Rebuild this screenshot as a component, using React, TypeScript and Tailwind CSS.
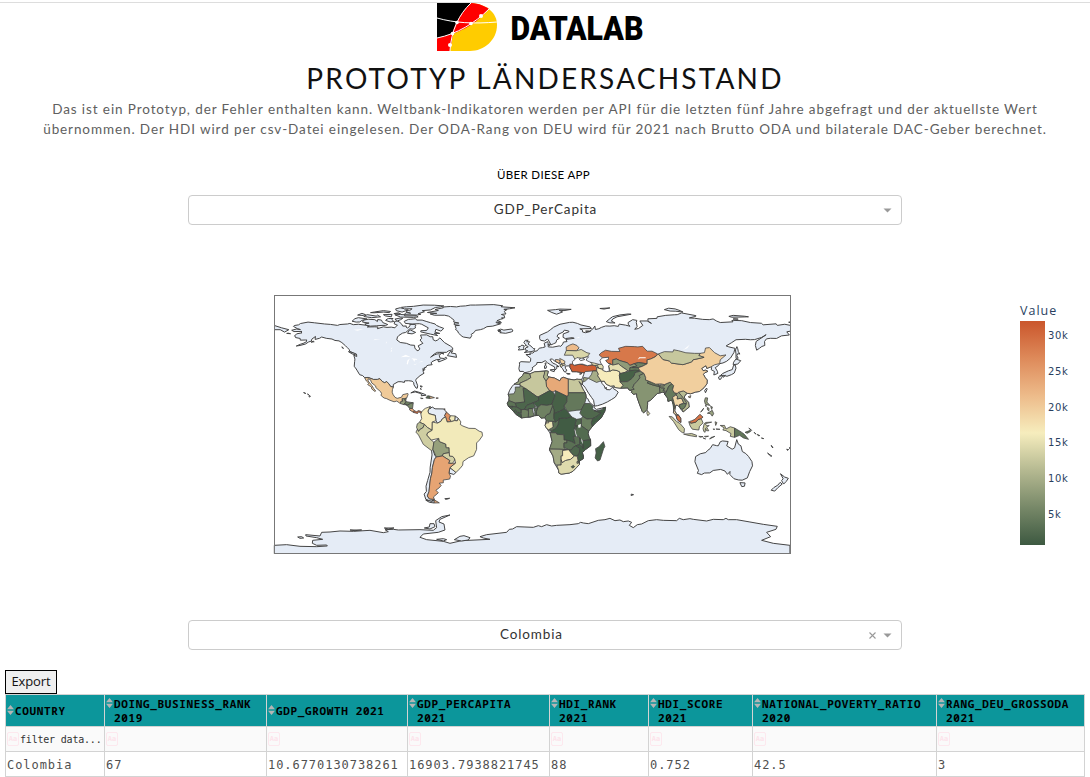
import React from "react";

type Shape = [number | null, string];

const LAND: string[] = [
  // North America down to the Mexican border
  "-168,65.6 -164.5,66.5 -161.9,66.1 -163.8,66.6 -166.8,68.3 -166.2,68.9 -163.2,69.4 -161.9,70.3 -156.6,71.3 -152,70.8 -145,70 -141,69.7 -136,69 -134.4,69.6 -129,70 -127.4,70.4 -125,69.5 -121.5,69.8 -115.2,69 -113.9,68.4 -115.3,67.9 -110,68 -107.8,67.9 -108.2,66.7 -104,68 -101.5,67.6 -98.5,67.8 -96,67.3 -95.5,68.1 -94.2,69.1 -96.5,70.1 -96,71.9 -94,72 -92.9,71.3 -91.5,70.2 -90.5,68.5 -88,68.6 -88.3,67.9 -87.3,67.2 -86,68 -85.5,68.8 -85.6,69.7 -82.6,69.7 -81.3,69.2 -82,68.1 -81.3,67.6 -83.3,66.4 -85.8,66.6 -87,65.2 -88.5,64.1 -90.7,63.6 -93.2,62 -94.2,60.9 -94.7,58.9 -92.3,57.1 -88,56.5 -85,55.3 -82.3,55.1 -82.1,53.3 -81.4,52.2 -79.9,51.2 -78.6,52.6 -79.8,54.7 -76.5,56.5 -78.5,58.8 -77.3,59.9 -78.1,62.3 -73.8,62.4 -71.4,61.1 -69.6,61.1 -69.3,59 -67.6,58.2 -66.2,58.8 -64.6,60.3 -61.4,57 -57.3,54.6 -55.7,53.3 -55.7,52.1 -58.8,51.1 -60,50.2 -66.4,50.2 -68.5,49.1 -71.1,46.8 -68.7,48.3 -66.6,49.1 -65.1,49.2 -64.2,48.7 -65.1,48.1 -64.5,46.2 -61.5,45.9 -60.5,47 -59.8,45.9 -61,45.3 -65.4,43.5 -66.1,44.5 -64.4,45.3 -67.1,45.1 -70.1,43.7 -70.8,42.8 -70,41.6 -72.9,41.2 -74,40.6 -74.2,39.7 -75.5,39.5 -75.1,38.4 -76,37.2 -76.3,39 -76.3,37 -75.7,35.6 -78.5,33.9 -81.3,31.4 -81.5,30.7 -80.1,26.9 -80.4,25.2 -81.2,25.2 -82.7,27.5 -82.9,29.1 -84,30.1 -86.4,30.4 -89.2,30.3 -89.4,29.2 -91.6,29.7 -93.8,29.7 -97.1,27.8 -97.1,25.9 -99,26.4 -100.3,28.3 -101.7,29.8 -103.1,29 -104.5,29.6 -106.5,31.8 -108.2,31.3 -111,31.3 -114.7,32.7 -117.1,32.5 -118.5,34 -120.6,34.6 -122.5,37.8 -123.8,39.8 -124.4,40.3 -124.1,43.7 -123.9,45.5 -124.7,48.2 -122.6,47.3 -122.8,49 -127.4,50.8 -128,52.3 -129.3,53.6 -130.5,54.8 -133,57 -135,58.2 -137.8,58.5 -139.9,59.5 -143.9,60 -147.1,60.9 -148.6,60 -151.7,59.2 -151.4,61.3 -154,59.4 -154.2,58.1 -156.3,57.4 -158.4,56 -162.2,55 -164.8,54.6 -161.8,55.9 -160.1,56.4 -157.7,57.6 -157.6,58.9 -158.5,58.8 -162,58.7 -162.1,59.9 -165.3,60.5 -165.3,61.1 -166.1,61.5 -164.6,63.1 -160.8,63.8 -161.5,64.4 -160.8,64.8 -166.4,64.7",
  // Canadian Arctic
  "-114,70.6 -117,70 -116.1,69.2 -113,68.5 -109,68.7 -105,69 -102.4,69 -101,69.6 -104.5,71 -105.4,72.7 -108,73.1 -108.2,71.7 -110,73 -114.5,73.3 -117.9,72.7 -118.6,71.3",
  "-121.5,74.4 -115.5,73.5 -119,72.5 -120.5,71.4 -123,71.3 -125.9,71.9 -123.9,73.7",
  "-100.4,73.8 -97.3,73.8 -98,73 -96.7,71.7 -99.3,71.4 -102.5,72.5 -101.5,73.4",
  "-92.4,74.1 -90.5,73.9 -92,73 -94.3,72.1 -96,73.4",
  "-108.2,76.2 -106,75 -112.2,74.4 -117.7,75.2 -115.4,76.5 -109,75.5",
  "-122,76.2 -118,75.9 -116.5,76.5 -119,77.4",
  "-104,76.5 -98,76.7 -98.5,75 -102.5,75.6",
  "-110,78.4 -113,77.9 -110.5,77.8 -103.8,78.3 -100,77.9 -99,78.7 -104,79.3",
  "-96.7,77.2 -92,77 -93.5,77.8",
  "-89.2,75.6 -81,75.7 -79.8,74.9 -83,74.6 -92,74.8 -96,76.4 -92,76.6 -89,76.4",
  "-87,79.7 -91,78.3 -95,79.3 -95.5,80.5 -92.4,81.3 -88,80.4",
  "-68.5,83.1 -61.9,82.6 -64.3,81.9 -67.8,81.5 -71.2,79.8 -76.9,79.3 -75.4,78.5 -79.8,77.2 -77.9,76.8 -80.6,76.2 -89.5,76.5 -88.3,77.9 -85,77.5 -88,78.4 -87,79.7 -85.8,79.3 -84,80.6 -89.4,80.5 -91.4,81.6 -87.9,82 -83,82.3 -76.3,83.2",
  "-86.6,73.2 -84.9,73.3 -81.5,73.7 -80.8,72.7 -77,72.7 -74.2,71.8 -71.2,70.9 -68,70 -67,69 -64.8,68 -61.9,66.9 -63.9,65 -67.4,66.3 -68,64.3 -64.7,63.4 -68.5,63.5 -66.2,61.9 -71,62.9 -78,64.5 -77.9,65.3 -73.9,65.4 -72.7,67.3 -77.3,69.8 -79,70.2 -84,70 -88.7,70.4 -89.5,71.8",
  "-85,65.7 -81.5,64.1 -84,63.1 -87.2,63.5 -85.9,65.7",
  "-55.6,51.3 -56.8,49.8 -53.5,49.2 -53,46.7 -59.4,47.9 -57.4,50.7",
  "-64.5,49.9 -61.8,49.1 -63.5,49.5",
  "-128.4,50.7 -125,49.9 -123.5,48.4 -126,49.2",
  "-133,54.1 -131.8,53 -132.5,53.1",
  "-180,66 -176,66 -173,64.3 -170,66 -175,67.3 -180,68.9",
  "-171.5,63.4 -168.8,63.2 -170.5,63.6",
  "-154.5,57.3 -152.3,57.6 -153,58",
  // Greenland, Iceland
  "-46.8,82.6 -43.4,83.2 -39.9,83.2 -27,83.5 -20.8,82.7 -22,82 -12.2,81.3 -16,80.6 -20,80.2 -17.7,80.1 -19.7,78.8 -18.5,77 -20,76.9 -21.7,76.6 -19.8,76.1 -19.4,74.3 -21.6,74.2 -20.4,73.8 -22.2,73.3 -24.8,72.3 -22.1,71.5 -21.8,70.7 -25.5,71.4 -25.2,70.8 -22.3,70.1 -27.7,68.5 -31.8,68.1 -34.2,66.7 -36.4,66 -39.8,65.5 -40.7,64.1 -42.8,62.7 -42.4,61.9 -43.4,60.1 -48.3,60.9 -49.2,61.4 -51.6,63.6 -52.3,65.2 -53.7,66.1 -53.3,66.8 -54,68.8 -51,69 -54.7,69.6 -54.4,70.8 -51.4,70.6 -55,71.4 -54.7,72.6 -57.3,74.7 -58.6,75.5 -61.3,76.1 -68.5,76.1 -71.4,77 -66.8,77.4 -73.3,78 -65.7,79.4 -68,80.1 -62.2,81.3 -62.7,81.8 -60.3,82 -57.2,82.2 -53,81.9 -50.4,82.4",
  "-14.5,66.5 -13.6,65.1 -14.9,64.4 -18.7,63.5 -22.8,63.9 -21.8,64.4 -24,64.9 -22.1,65.4 -24.3,65.6 -22.2,66.4 -20,65.7",
  // Hawaii, Caribbean
  "-155.9,20.2 -154.9,19.5 -155.8,19",
  "-156.6,21 -156.1,20.7 -157,21.1",
  "-159.7,22.1 -159.3,22 -158.2,21.5",
  "-84.9,21.9 -82.3,23.2 -79.3,22.4 -75.6,21.1 -74.2,20.3 -77.7,19.9 -77.1,20.7 -78.5,21.6 -81.8,22.6",
  "-78.2,25.2 -77.8,24.2 -77.6,24.7",
  "-78.5,26.7 -77,26.6 -77.2,25.9",
  // Eurasia
  "-9,41.9 -9.5,38.7 -8.9,36.9 -6.5,36.9 -5.4,36 -2.1,36.7 -0.4,37.6 0.1,38.7 -0.3,39.4 3,41.9 3.1,43.1 6.5,43.1 8.9,44.4 10.5,42.9 12.3,41.7 15.4,40 15.7,37.9 17,39 16.9,40.4 18.5,40.2 16,41.9 14,42.8 12.4,44.9 12.3,45.4 13.9,45.6 14.3,45.2 15.2,44.2 18.5,42.5 19.4,41.9 19.4,40.5 21,38.8 22,36.8 23.2,36.4 23.4,37.4 24,37.7 23,39 22.8,40.5 24,40.7 26.1,40.8 26.2,39.5 27,38.2 27.6,36.7 30.6,36.7 34,36.2 36.2,36.6 35.7,34.6 34.9,32.5 34.3,31.3 32.3,31.2 32.5,29.9 34.2,27.8 34.9,29.4 34.6,28.1 36.6,25.9 37.2,24.9 39.1,21.7 41.2,18.7 42.6,16.8 43.3,12.7 45.4,13 48.7,14 52.2,15.6 55.3,17.4 57.8,19 59.8,22.4 58.5,23.6 56.4,24.9 56.3,26.3 54,24.1 51.6,24.2 51.4,25.9 50.8,24.8 50.1,26.7 48.5,28.5 48,30 50.1,30.1 51.5,27.9 54.5,26.6 57,26.9 57.3,25.7 61.5,25.2 66.5,25.4 67.3,24 68.2,23.7 69.5,22.8 69,22.3 70.4,20.9 72.6,21.4 72.8,19.2 74.4,14.6 76.6,8.9 77.5,8 79.2,9.5 79.9,10.4 80.3,13.8 80.3,15.9 82.2,16.6 85.1,19.5 87,21.5 89,21.9 90.6,22.4 91.8,22.2 92.4,20.7 94.3,18.2 94.5,16 97.2,16.9 98.1,14 98.7,11.5 98.3,8 100.1,6.5 100.7,4 101.4,2.8 103.5,1.3 103.4,4.2 102.1,6.2 100.5,7.3 99.2,9.3 99.5,12 100,13.4 100.9,13.4 102.6,12.2 103.5,10.6 105.1,8.6 107.2,10.4 109.3,12 108.9,15.3 106.4,17.9 105.9,19 106.7,20.7 108.1,21.6 110.4,21.3 113.8,22.5 116.5,22.9 119.6,25.5 121.7,28.2 121.9,30.9 120.6,32.4 119.2,34.9 120.3,36.1 122.4,36.9 121,37.8 119,37.4 118,39 121,40.9 121.6,39 124.3,40 125,39.7 124.7,38.1 126.9,36.9 126.5,34.4 129.3,35.5 129,37 127.5,39.5 129.7,41 130.6,42.3 132.9,42.8 135.5,44 138.2,46.3 140.5,50 141.3,53 137,54 135.1,54.7 139,57 142,59 148.5,59.3 152,59 155,59.1 159.8,60.6 163,62.5 160.1,60.5 156,57.8 155.5,55 156.4,51.7 158.3,53 160,54.3 162.1,55 161.9,57.8 163.2,59.6 165.9,60 170.3,59.9 173.7,61.7 179.2,62.3 177.4,64.5 180,65 180,69 176,69.8 170.8,69 170,70.1 160.9,69.4 159.7,70.5 152,71 146,72.3 140,72.5 139.1,72.4 139.9,71.5 131,71 128.5,72 126,73.5 123.3,73 118.8,73.2 113,74 109.4,74.2 113.9,75.3 114,75.8 104,77.7 101,76.5 98.9,76.4 93,76 87,75 86.8,73.9 80.5,73.6 80.6,71.9 83,70.4 80,72.1 74.9,72.1 77,69 73.9,66.8 71.3,66.3 73,68.2 72.4,71.1 72.8,72.5 69.9,73 66.7,71 66.9,69.5 68.1,68.4 64.9,69.2 60.5,69.9 59.9,68.3 57,68.8 54,68.5 51,68.6 48,67.6 46.3,66.7 43.9,66.1 43.5,68.6 42,66.4 40,65 37,65 40.4,64.8 37,63.9 34.9,64.4 34.8,65.9 33,66.6 41.1,66.8 40.3,67.9 33.8,69.3 31.3,70.4 28.2,71.2 25.8,71.1 19.2,69.8 14.8,67.8 12.4,65.9 10.5,64.5 5,62 5,59.7 5.7,58.6 8.4,58.1 10.4,59.5 11,58.9 12.9,55.4 14.7,56.2 16.4,57 16.8,58.7 18.8,60.1 17.1,61.3 17.8,62.7 21.4,64.4 22.2,65.7 25.3,65.1 25.4,64.5 21.5,63.1 21.3,60.7 22.9,59.8 28,60.5 29.1,60 23.3,59.2 24.1,57.7 21.6,57.4 21.1,56 19.7,54.4 18.6,54.7 14.1,53.8 11,54 10.9,56.5 10.6,57.7 8.1,56.5 8.8,54 7,53.5 4.7,53.1 3.3,51.3 1.6,50.9 0.2,49.7 -1.9,49.8 -1.4,48.7 -4.6,48.7 -1.2,46 -1.4,44 -1.9,43.4 -8,43.7 -9.2,43",
  "-3,58.6 -4.1,57.6 -2,57.6 -3.1,56 -1.1,54.6 0.5,52.9 1.7,52.7 1,51.8 1.4,51.3 -1,50.7 -5.7,50.1 -3.4,51.4 -5.3,52 -4.6,53.5 -3,53.9 -3.6,54.6 -5.1,55 -4.7,55.5 -6,57 -5,58.6",
  "-6.2,53.9 -6,52.2 -9.9,51.8 -9.2,52.9 -9.8,54.1 -8.2,54.5 -7.4,55.3 -5.7,54.6",
  "9.2,41.2 9.8,40.5 9.5,39.1 8.4,39 8.4,40.8",
  "9.5,43 9.2,41.5 8.6,42.3",
  "12.4,38.1 15.5,38.2 15.1,36.7 12.5,37.6",
  "23.7,35.6 26.3,35.2 24.7,34.9",
  "32.8,35.1 34.6,35.6 33.7,34.9",
  "10.9,55.7 12.6,56 12.2,55 11,55.3",
  "16,80 19,80.4 27,80.2 22,79.3 18.5,79.6 21,78.4 16.8,76.8 13.5,78 10.5,79.5",
  "47,80.8 54,81.2 50,80.4",
  "51.5,71.6 54,70.8 57.6,70.7 55,72 56,73.5 59,75 68.8,76.8 67,77 61,76.3 55.9,75.1 54,73.7",
  "95,81 92,80 96,79 100,78.9 105,78.3 103,79.3 99.5,80.5",
  "137,75.3 140,76 148,75.4 150.7,75 144,74.8 139,74.7",
  "139.9,73.4 143.5,73.4 140.5,73.6",
  "178.7,71.2 180,71.5 180,70.9",
  "143.6,50.7 144.7,49 143.2,49.3 142.6,47.9 143.5,46.1 142,46 142,49 141.6,51.9 142.6,54.2 143.2,52.7",
  "141.9,45.5 145.3,44.4 143.2,42 140,41.6 140.3,43.3",
  "141.4,41.4 142,39.2 140.8,35.8 138.9,34.7 135.7,33.5 133,34.2 131,33.9 132.6,35.4 136.7,37.3 139.4,38.2 140.3,41.2",
  "130.9,33.9 132,32.8 131.3,31.4 130.2,31.4 129.8,33",
  "134.6,34.1 133,32.8 132.4,33.5",
  "121.8,24.4 120.7,22 120.1,23.6 121.5,25.3",
  // Australia and Pacific
  "143.6,-13.8 145.4,-15 146.4,-19 148.8,-20.4 150.7,-22.4 153.1,-26 153.5,-29 151.5,-33 149.9,-37.4 146.3,-39 143.6,-38.8 140.6,-38 138.2,-35.6 137.7,-35 137.8,-32.9 136,-34.9 134.3,-32.6 131.3,-31.5 126.1,-32.2 123.7,-33.9 119.9,-34 118,-35.1 115,-34.2 115.8,-32.2 113.3,-26.1 113.8,-22.5 117,-20.6 120.9,-19.7 122.2,-18.2 123.9,-17 125.7,-14.2 128.4,-14.9 129.6,-15 131,-12.2 132.6,-11.6 136.5,-12 135.5,-15 139.3,-17.4 141,-16.4 142.5,-10.7",
  "144.7,-40.7 148.3,-40.9 147.9,-43.2 146,-43.5",
  "173,-34.5 175.9,-36.8 178.5,-37.7 177,-39.9 175.2,-41.7 173.8,-39.3 174.9,-38",
  "172.8,-40.5 174.2,-41.7 171.2,-44.2 169,-46.6 166.5,-46 168.4,-44.1 171.1,-42.5",
  "164,-20.1 167,-22.2 166.2,-22.2",
  "177.3,-17.5 178.7,-17.6 178,-18.2",
  "179,-16.5 180,-16.1 179.5,-16.8",
  "166.6,-14.7 167.8,-16.4 167.1,-16",
  "-61.2,-51.9 -57.8,-51.6 -59.4,-52.2 -60.7,-52.3",
  "68.9,-48.7 70.5,-49.1 68.8,-49.7",
  // Africa
  "-6,35.8 -1.8,35.2 1.5,36.6 9.5,37.3 11,37 10.3,34 11.5,33 15.3,32.3 19,30.3 20.1,32.2 21.5,32.8 25,31.6 29,30.9 31,31.5 32.3,31.2 32.5,29.9 33.6,27.8 35.5,24 37.2,21 37.5,18.6 38.5,18 39.8,15.4 43.1,12.5 43.1,11.5 44.6,10.4 51,11.9 50.5,9.2 48,4.5 44,1 41.6,-1.7 39.2,-4.7 38.8,-6.5 39.5,-9 40.5,-10.8 40.6,-15 37,-17.6 34.8,-19.8 35.5,-22.1 35.4,-24 32.8,-25.6 32.8,-28 31,-29.9 28.2,-32.8 25.7,-34 20,-34.8 18.4,-34 18.2,-32 15.2,-27 14.3,-22.1 11.8,-18 13.7,-12 12.2,-6 9.3,-2 8.8,-0.8 9.6,3 8.5,4.6 6,4.3 4.3,6.3 1.2,5.9 -2,4.8 -4.6,5.2 -7.6,4.4 -11.4,6.8 -13.2,8.9 -15,10.9 -16.8,12.5 -17.6,14.7 -16.5,16.5 -16.3,19 -17,21 -15.9,23.8 -14.4,26.2 -12.9,27.9 -9.8,29.8 -9.8,31.4 -6.9,34",
  // South America without data
  "-71.4,12.4 -71.6,10.8 -70,12.1 -68,10.8 -62,10.7 -60,8.5 -61.3,6 -60.7,5.2 -62.8,3.9 -64,2 -66.3,0.8 -67.4,2.5 -67.8,6.2 -72.3,7.4 -73,9.2",
  "-54,5.8 -51.7,4.1 -52.5,2.4 -54.3,2.6",
  "-69.5,-17.5 -68.2,-21.5 -67.1,-22.8 -68.4,-24.5 -69.8,-30 -70.2,-34 -71.2,-38 -71.8,-43 -72.2,-47 -73.4,-50 -72,-52 -68.5,-52.4 -70.8,-53.8 -74.5,-52.2 -75.6,-48.7 -74,-46.8 -74.3,-43.2 -73.2,-39.3 -71.5,-33.5 -71.4,-30 -70.1,-21.4 -70.4,-18.4",
  "-57.6,-30.2 -53.4,-33.6 -54.9,-35 -58.3,-34",
  "-68.6,-52.7 -68.6,-54.9 -72,-54.4 -74.5,-52.9 -70,-53.8",
];

const DATA: Shape[] = [
  [20, "-117.1,32.5 -114.7,32.7 -111,31.3 -108.2,31.3 -106.5,31.8 -104.5,29.6 -103.1,29 -101.7,29.8 -100.3,28.3 -99,26.4 -97.1,25.9 -97.7,24.3 -97.9,22.4 -97.2,20.6 -95.9,18.8 -94.4,18.1 -91.4,18.9 -90.5,20.7 -87,21.5 -86.8,20.8 -87.8,18.3 -89.1,17.8 -91,17.8 -90.5,16.1 -91.7,16.1 -92.2,14.5 -94.7,16.2 -96.6,15.7 -100,17 -102,18 -103.5,18.3 -105.5,19.9 -105.7,20.4 -105.3,21.4 -106,22.8 -109.3,25.6 -109.4,26.7 -112.2,28.9 -113.1,31.2 -114.8,31.8 -114.7,30.2 -112.2,27.2 -110.7,24.8 -109.4,23.2 -110,22.9 -112.2,24.7 -112.3,26 -115,27.7 -114.2,28.6 -115.9,30.2"],
  [9, "-92.2,14.5 -91.7,16.1 -90.5,16.1 -91,17.8 -89.1,17.8 -88.2,15.8 -90,13.8"],
  [6.5, "-89.1,17.8 -88.2,18.4 -88.3,16.5 -88.9,16"],
  [5, "-88.2,15.8 -83.2,15 -85,14.5 -87.5,13.2 -89.3,14.4"],
  [6, "-87.5,13.2 -85,14.5 -83.2,15 -83.7,11 -85.7,11.1"],
  [9, "-90,13.8 -89.3,14.4 -87.7,13.5"],
  [23, "-85.7,11.1 -83.7,11 -82.6,9.5 -83,8.3 -85.7,10"],
  [30, "-82.6,9.5 -80.8,8.8 -79.5,9.6 -77.3,8.7 -78,7.6 -79.3,8.9 -80.2,7.5 -83,8.3"],
  [3, "-73.2,19.9 -71.7,19.7 -71.7,18 -74.4,18.4"],
  [21, "-71.7,19.7 -68.4,18.6 -71.7,18"],
  [10, "-78.2,18.4 -76.3,18 -77.7,17.9"],
  [30, "-67.2,18.5 -65.7,18.3 -67.1,18"],
  [24, "-61.9,10.7 -61,10.8 -61.1,10.1"],
  [16.5, "-77.3,8.7 -75.6,10.6 -74.8,11.1 -71.4,12.4 -73,9.2 -72.3,7.4 -67.8,6.2 -67.4,2.5 -69.9,1.6 -70,-4.2 -73.2,-2.3 -75.3,-0.1 -78.8,1.4 -77.3,4 -77.9,7.2"],
  [11.5, "-78.8,1.4 -75.3,-0.1 -76.6,-2.6 -78.3,-3.4 -79.5,-5 -80.3,-3.4 -80.9,-2.2 -80.4,0.3"],
  [13.2, "-75.3,-0.1 -73.2,-2.3 -70,-4.2 -73.2,-6 -73.7,-7.5 -70.6,-11 -68.8,-12.5 -69.5,-17.5 -70.4,-18.4 -76.2,-14 -79.5,-7.5 -81.3,-5.5 -80.3,-3.4 -79.5,-5 -78.3,-3.4 -76.6,-2.6"],
  [26, "-60,8.5 -57.2,6 -58,4 -56.5,1.9 -59.5,1.6 -60.7,5.2 -61.3,6"],
  [16, "-57.2,6 -54,5.8 -54.3,2.6 -56.5,1.9 -58,4"],
  [8.5, "-68.8,-12.5 -65.4,-9.8 -65,-12 -60.5,-13.8 -60.2,-16.3 -58.2,-16.3 -58,-19.8 -62.2,-20.5 -62.8,-22.1 -67.1,-22.8 -69.5,-17.5"],
  [13.5, "-62.2,-20.5 -58,-19.8 -57.9,-22.1 -55.6,-22.4 -54.3,-24.1 -54.6,-25.6 -56,-27.3 -58.6,-27.2 -57.7,-25.3 -62.8,-22.1"],
  [16, "-51.7,4.1 -50,1.7 -50.4,-0.1 -48.6,-1.2 -44.4,-2.8 -40,-2.9 -37.2,-4.8 -35.2,-5.5 -34.9,-8 -37,-11 -39,-13 -39,-17.5 -41,-22 -44.6,-23.3 -48.5,-26 -48.7,-28.5 -50.7,-31 -53.4,-33.6 -57.6,-30.2 -53.7,-27 -54.3,-24.1 -55.6,-22.4 -57.9,-22.1 -58.2,-16.3 -60.2,-16.3 -60.5,-13.8 -65,-12 -65.4,-9.8 -70.6,-11 -73.7,-7.5 -73.2,-6 -70,-4.2 -69.9,1.6 -66.3,0.8 -64,2 -62.8,3.9 -60.7,5.2 -59.5,1.6 -56.5,1.9 -54.3,2.6 -52.5,2.4"],
  [24, "-67.1,-22.8 -62.8,-22.1 -57.7,-25.3 -58.6,-27.2 -56,-27.3 -53.7,-27 -57.6,-30.2 -58.3,-34 -57.2,-36.2 -57.8,-38.2 -62.3,-38.9 -62.2,-40.8 -65.1,-41.1 -63.7,-42.7 -65.3,-44.5 -67.4,-46 -65.7,-47.8 -69.1,-50.7 -68.5,-52.4 -72,-52 -73.4,-50 -72.2,-47 -71.8,-43 -71.2,-38 -70.2,-34 -69.8,-30 -68.4,-24.5"],
  [24, "-68.6,-52.7 -65,-54.8 -68.6,-54.9"],
  // Africa
  [8.5, "-6,35.8 -1.8,35.2 -1.2,32.5 -3.6,31 -8.7,28.7 -8.7,27.7 -12.9,27.9 -9.8,29.8 -9.8,31.4 -6.9,34"],
  [6.5, "-13,21.3 -12,23.4 -12,26 -8.7,26 -8.7,27.3 -4.9,25 -6.5,25 -5.5,15.5 -12,14.8 -16.5,16.5 -16.3,19 -17,21"],
  [12.5, "-1.8,35.2 1.5,36.6 8.5,37 8.3,35 7.6,33 9.5,30.2 9.8,26.5 12,23.5 4.2,19.2 3.2,19.2 -4.9,25 -8.7,27.3 -8.7,28.7 -3.6,31 -1.2,32.5"],
  [10.5, "8.5,37 9.5,37.3 11,37 10.3,34 11.5,33 9.5,30.2 7.6,33 8.3,35"],
  [23.5, "11.5,33 15.3,32.3 19,30.3 20.1,32.2 21.5,32.8 25,31.6 25,20 24,19.5 15.9,23.4 14.2,22.5 12,23.5 9.8,26.5 9.5,30.2"],
  [12.5, "25,31.6 29,30.9 31,31.5 34.3,31.3 34.9,29.4 34.2,27.8 32.5,29.9 33.6,27.8 35.5,24 36.9,22 25,22"],
  [2.2, "-4.9,25 3.2,19.2 4.2,19.2 4.2,16.5 0.4,15 -4,13.2 -5.5,10.4 -8,10.2 -11.4,12.2 -12,14.8 -5.5,15.5 -6.5,25"],
  [1.3, "4.2,19.2 12,23.5 14.2,22.5 15.9,20.5 13.5,14 10,13.2 6,13.7 3.6,11.7 0.4,15 4.2,16.5"],
  [1.6, "15.9,23.4 24,19.5 24,15.7 22,12.8 22.5,11 19,9 15,7.5 15,10 14,13 13.5,14 15.9,20.5"],
  [4.2, "25,22 36.9,22 37.5,18.6 36.4,14.5 34,10 31,9.8 24.5,8.9 22,12.8 24,15.7 24,19.5 25,20"],
  [2.4, "36.4,14.5 40,14.5 42.3,12.5 41.8,11 43,9.5 48,8 44,5 41.9,4 38,3.6 35,5.5 33,7.8 34,10"],
  [1.2, "43,9.8 44.6,9.4 49,10.4 49,11.3 51,11.9 50.5,9.2 48,4.5 44,1 41.6,-1.7 41,1 41.9,4 44,5 48,8 43,9.5"],
  [4.9, "35,5.5 38,3.6 41.9,4 41,1 41.6,-1.7 39.2,-4.7 34,-1 34,4"],
  [2.4, "31,3.5 34,4 34,-1 29.6,-1.4 30,1.5"],
  [2.7, "34,-1 39.2,-4.7 38.8,-6.5 39.5,-9 40.5,-10.8 34.6,-11.5 32.9,-9.4 29.5,-6.5 30.5,-2.5 30.8,-1"],
  [2, "29.6,-1.4 30.8,-1 30.5,-2.5 29.5,-4.4 29,-2.7"],
  [1.1, "18.6,4.5 22.5,4.2 27.4,5.1 30.8,3.5 30,1.5 29.6,-1.4 29,-2.7 29.5,-4.4 29.5,-6.5 30.7,-8.3 28.5,-8.5 29.7,-13.4 27,-12 22,-11 21.8,-7.3 17,-7 16.5,-5.9 12.4,-5.9 13,-4.6 16,-3 17.7,-0.5"],
  [3.5, "13.2,2.2 16.1,1.7 18.6,3.5 17.7,-0.5 16,-3 13,-4.6 11.1,-3.9 14.4,-2 14,1.4"],
  [15.4, "11.3,2.2 13.2,2.2 14,1.4 14.4,-2 11.1,-3.9 9.3,-2 8.8,-0.8 9.6,1"],
  [15, "9.8,2.3 11.3,2.2 11.3,1 9.6,1"],
  [3.9, "8.5,4.6 9.6,3 9.8,2.3 13.2,2.2 16.1,1.7 15,4 15,7.5 15,10 14,13 12,7.5 10,6.8"],
  [1, "15,7.5 19,9 22.5,11 24.5,8.9 27.4,5.1 22.5,4.2 18.6,4.5 18.6,3.5 16.1,1.7 15,4"],
  [5.2, "2.7,6.3 2.7,9 3.6,11.7 6,13.7 10,13.2 13.5,14 14,13 12,7.5 10,6.8 8.5,4.6 6,4.3 4.3,6.3"],
  [3.4, "1.6,6.2 2.7,6.3 2.7,9 3.6,11.7 1,11.1 1.6,9"],
  [5.5, "-3,5 1.2,5.9 0.5,8 0,11 -2.9,11 -2.8,8"],
  [5.3, "-7.6,4.4 -3,5 -2.8,8 -3,10 -5.5,10.4 -8,10.2 -8,7"],
  [2.3, "-5.5,10.4 -4,13.2 0.4,15 2.2,12 0,11 -2.9,11 -3,10"],
  [1.4, "-11.4,6.8 -7.6,4.4 -8,7 -9.5,8.4"],
  [1.7, "-13.2,8.9 -11.4,6.8 -10.3,8.5 -12,10"],
  [2.6, "-15,10.9 -13.2,8.9 -12,10 -10.3,8.5 -8,7.7 -8,10.2 -11.4,12.2 -13.7,12.6"],
  [3.6, "-16.8,12.5 -17.6,14.7 -16.5,16.5 -12,14.8 -11.4,12.2"],
  [2.2, "-16.8,12.5 -13.7,12.6 -15,10.9"],
  [6.6, "12.4,-5.9 16.5,-5.9 17,-7 21.8,-7.3 22,-11 24,-11 24,-13 22,-13 22,-16.2 23.3,-17.6 18.5,-17.4 11.8,-17.3 13.7,-12"],
  [3.3, "24,-11 27,-12 29.7,-13.4 28.5,-8.5 30.7,-8.3 32.9,-9.4 33,-14 30.2,-15 28.5,-16 27,-18 25.3,-17.7 22,-16.2 22,-13 24,-13"],
  [9.7, "11.8,-17.3 18.5,-17.4 25.3,-17.7 21,-18.3 21,-22 20,-22 20,-28.4 17,-28.6 15.2,-27 14.3,-22.1"],
  [16.5, "21,-18.3 25.3,-17.7 27.5,-20.5 29.3,-22.1 26.5,-24.5 23,-25.3 20.7,-26.8 20,-24.7 20,-22 21,-22"],
  [2.3, "25.3,-17.7 27,-18 28.5,-16 30.2,-15 33,-16.8 32.7,-20 31.2,-22.3 29.3,-22.1 27.5,-20.5"],
  [1.3, "40.5,-10.8 40.6,-15 37,-17.6 34.8,-19.8 35.5,-22.1 35.4,-24 32.8,-25.6 32.8,-26.8 32,-26.8 31.2,-22.3 32.7,-20 33,-16.8 30.2,-15 33,-14 35.3,-16 34.6,-11.5"],
  [1.5, "32.9,-9.4 34.6,-11.5 35.8,-15.8 35.3,-17 34.3,-14.5 33,-13.5"],
  [14.4, "17,-28.6 20,-28.4 20,-24.7 20.7,-26.8 23,-25.3 26.5,-24.5 29.3,-22.1 31.2,-22.3 32,-26.8 32.8,-26.8 32.8,-28 31,-29.9 28.2,-32.8 25.7,-34 20,-34.8 18.4,-34 18.2,-32"],
  [2.5, "27,-29.6 28.5,-28.7 29.4,-29.5 28,-30.6"],
  [9, "31,-26 32,-26 32,-27.2 31,-27.2"],
  [1.5, "49.5,-12.1 50.5,-15.5 49.6,-17 47.1,-24.9 45.4,-25.6 43.7,-23.5 44.4,-20 44,-17 46.3,-15.7"],
  // Europe and western Asia
  [31, "26.2,39.5 26.1,40.8 26,42 28,42 29.1,41.2 33.3,42 38.3,40.9 41.5,41.5 43.6,41.1 44.8,39.7 44.5,37.2 42,37.2 36.7,36.8 36.2,35.9 34,36.2 30.6,36.7 27.6,36.7 27,38.2"],
  [21.5, "23.5,53.9 26,55.3 28.2,56.1 31,55 32.5,53.3 30.6,51.3 23.6,51.5"],
  [14, "23.6,51.5 30.6,51.3 34,52.2 38,49.9 40,49.5 38.2,47.1 35,46.2 33,46.1 29.6,45.4 28,48.2 22.2,48.2"],
  [21, "16,45.2 18,45.1 19.4,44 18.5,42.5 16,44"],
  [19, "19,45.9 21,45 22.6,44 22.4,42.4 20.5,42 19.4,43.5"],
  [15, "19.4,41.9 20.5,42 21,40.8 20,39.8 19.4,40.5"],
  [17, "20.5,42 22.4,42.3 22.9,41.3 21,40.9"],
  [16, "40,43.4 43.5,42.6 46.5,41.8 46,41.2 43.6,41.1 41.5,41.5"],
  [14, "43.6,41.1 45,41.2 46.5,39 44.8,39.7"],
  [14.5, "45,41.2 46.5,41.8 48.5,41.8 50.3,40.3 48.9,38.3 46.5,39"],
  [10, "42,37.2 44.8,37.2 46,35 45.5,33.9 48,30 47,30 44.7,29.2 39,32 41,34.5"],
  [9, "35.7,32.7 39,32.2 37,30.3 35,29.4"],
  [16.5, "44.8,39.7 46.5,39 48.9,38.3 50,37.3 54,37 56,38 59,37.5 61,36.5 60.6,34 61,31.4 63.3,27.2 61.5,25.2 57.3,25.7 57,26.9 54.5,26.6 51.5,27.9 50.1,30.1 48,30 45.5,33.9 46,35 44.8,37.2"],
  [28.5, "46.5,48.4 48,50 51,51.7 55,50.9 61,50.8 60,53 65,54.4 71,54.2 73.5,54 76.8,54.4 80,51 83.4,51 87.3,49.1 85.5,47 82.3,45.5 80,45 80,42.2 74,43.1 71,42.3 68,41.1 66,43 61,44.4 58.5,45.6 56,45 56,41.3 54,42.3 52.5,41.8 50.3,44.4 53,46.7 49,46.2"],
  [8, "56,45 58.5,45.6 61,44.4 66,43 68,41.1 71,42.3 73,40.8 71,40.2 68,39.5 67.8,37.2 66.5,37.4 62,40.5 60,42.2 56,41.3"],
  [15, "52.5,41.8 54,42.3 56,41.3 60,42.2 62,40.5 66.5,37.4 64.5,36.2 61,35.3 61,36.5 59,37.5 56,38 54,37 53.5,39.5"],
  [5.1, "71,42.3 74,43.1 80,42.2 76.5,40.4 73.7,39.5 69.5,39.6 73,40.8"],
  [4, "67.8,37.2 68,39.5 71,40.2 69.5,39.6 73.7,39.5 75,37.4 71.5,36.8 69.5,37.2"],
  [1.6, "61,35.3 64.5,36.2 67.8,37.2 71.5,37.9 75,37.3 71.5,36 71,34 69.3,31.9 66.4,29.8 61,29.6 61,31.4 60.6,34"],
  [5.8, "61,29.6 66.4,29.8 69.3,31.9 71,34 71.5,36 75,37 77.8,35.5 74.5,34 75,32.5 73,30 71,27.9 70,25.7 71,24.4 68.2,23.7 67.3,24 66.5,25.4 61.5,25.2 63.3,27.2"],
  [7.2, "77.8,35.5 79,32.5 78.8,31 81,30.2 80.1,28.8 84,27.4 88.1,26.4 88.1,27.9 89,26.8 92,26.9 92,27.7 96,29.4 97.3,28.2 95,26.5 94,24 93,22 92,24 91,23.5 92,25.2 89.8,25.3 88.5,26.5 88.9,24 89,21.9 87,21.5 85.1,19.5 82.2,16.6 80.3,15.9 80.3,13.8 79.9,10.4 79.2,9.5 77.5,8 76.6,8.9 74.4,14.6 72.8,19.2 72.6,21.4 70.4,20.9 69,22.3 69.5,22.8 68.2,23.7 71,24.4 70,25.7 71,27.9 73,30 75,32.5 74.5,34"],
  [4.2, "81,30.2 86,28 88.1,27.9 88.1,26.4 84,27.4 80.1,28.8"],
  [11, "89,26.8 92,26.9 91.5,28 89.7,28.2"],
  [6, "88.5,26.5 89.8,25.3 92,25.2 91,23.5 92.3,23 92.4,20.7 91.8,22.2 90.6,22.4 89,21.9"],
  [13.5, "80,9.8 81.8,7.5 80.5,6 79.8,7.5"],
  [4.3, "92.4,20.7 93,22 94,24 95,26.5 97.3,28.2 98.5,27 97.7,24 99,22 101,21.5 97.7,18.8 98.5,16 99.5,12 98.5,10 98.1,14 97.2,16.9 94.5,16 94.3,18.2"],
  [18.5, "97.7,18.8 100,20.4 101.2,19.5 101,17.7 104,18.3 105.5,15 102.5,13.6 102.6,12.2 100.9,13.4 100,13.4 99.2,9.3 100.5,7.3 102.1,6.2 100.1,6.5 98.3,8 98.5,10 99.5,12 98.5,16"],
  [8.3, "100,20.4 101.8,22.4 104,20 105,18.7 107.5,15.3 106,14 105.5,15 104,18.3 101,17.7 101.2,19.5"],
  [4.8, "102.5,13.6 105.5,14.5 107.5,14.5 106.3,11.7 104.5,10.4 103,11"],
  [11.5, "101.8,22.4 105.3,23.3 108.1,21.6 106.7,20.7 105.9,19 106.4,17.9 108.9,15.3 109.3,12 107.2,10.4 105.1,8.6 104.5,10.4 106.3,11.7 107.5,14.5 107.5,15.3 105,18.7 104,20"],
  [19.5, "73.7,39.5 76.5,40.4 80,42.2 80,45 82.3,45.5 85.5,47 87.8,49.1 91,45.2 95.4,44.2 97,42.7 105,41.6 111,43.5 112,45 119.7,46.7 116,48 117,49.5 120,50 120.7,53.2 123.5,53.5 127,50 131,47.8 135,48.4 131,45 130.6,42.4 127,41.5 124.3,40 121.6,39 121,40.9 118,39 119,37.4 121,37.8 122.4,36.9 120.3,36.1 119.2,34.9 120.6,32.4 121.9,30.9 121.7,28.2 119.6,25.5 116.5,22.9 113.8,22.5 110.4,21.3 108.1,21.6 105.3,23.3 101.8,22.4 101,21.5 99,22 97.7,24 98.5,27 97.3,28.2 96,29.4 92,27.7 89.7,28.2 86,28 81,30.2 78.8,31 79,32.5 77.8,35.5 75,37.4"],
  [19.5, "108.6,19.2 110.5,20 110,18.4"],
  [12.5, "87.8,49.1 92,50.7 98,50.5 98.5,52 102,51.3 107,49.9 113,49.5 117,49.5 116,48 119.7,46.7 112,45 111,43.5 105,41.6 97,42.7 95.4,44.2 91,45.2"],
  // South-east Asia
  [29, "100.1,6.5 102.1,6.2 103.4,4.2 103.5,1.3 101.4,2.8 100.7,4"],
  [12.8, "95.3,5.5 97.5,5.2 100.5,2 103,0.5 106,-3 105.8,-5.8 104.5,-5.8 102,-3.8 98.5,1.8"],
  [12.8, "105.4,-6.8 108.5,-6.7 111,-6.4 114.5,-7.7 114.4,-8.7 108.5,-7.7"],
  [12.8, "109,1.8 110.5,0.8 114,1.5 115.5,3.2 117.7,4 119,1 116.5,-1.5 116,-4 111.5,-3.4 110,-1.2"],
  [29, "109.6,2 111.2,2.5 113.3,3.5 116.8,7 119,5 117.7,4 115.5,3.2 114,1.5 110.5,0.8"],
  [12.8, "119.8,0.5 121,1.3 125,1.5 120.5,0.4 121.5,-1 123.3,-0.9 121.5,-2 123,-4.5 121.5,-4.5 120.8,-2.8 120.4,-5.6 119.5,-5 119,-3"],
  [12.8, "131,-0.8 134,-0.8 135,-3.3 138,-1.7 141,-2.6 141,-9.1 138,-8.4 138.5,-6.5 135,-4.4 132.8,-4 133.8,-2.5"],
  [4, "141,-2.6 145.8,-5.5 147.8,-7 150.7,-10.5 147.2,-9.5 144.5,-7.7 141,-9.1"],
  [4, "148.3,-5.6 152,-4.2 152.2,-5 149.8,-6.3"],
  [4, "150.9,-2.7 153,-4.3 152.5,-3.8"],
  [4, "154.6,-5.5 156,-6.8 155.2,-6.5"],
  [2.6, "156.8,-7 158.6,-7.9 157.5,-8"],
  [2.6, "159.8,-9.4 161.4,-10 160,-9.9"],
  [12.8, "127.4,1.8 128.7,1.2 127.8,-0.8"],
  [12.8, "128,-3.2 130.8,-3.5 128.5,-3.5"],
  [12.8, "126,-3.2 127.2,-3.5 126.2,-3.6"],
  [12.8, "116,-8.4 119,-8.6 117,-9"],
  [12.8, "120,-8.4 122.8,-8.3 120.5,-8.9"],
  [5, "123.6,-10.3 127.2,-8.4 124.5,-9.2"],
  [12.8, "119,-9.5 120.8,-10.2 119.6,-9.9"],
  [8.8, "120.6,18.5 122.2,18.4 121.7,15.5 124,13 123.5,13.2 120.6,14 120,16.3"],
  [8.8, "122,7.7 123.5,8.5 125.4,9.8 126.4,7.4 125.4,5.7 124,7.5"],
  [8.8, "122,11.8 123.2,11.1 123,9.2 122,10.5"],
  [8.8, "124.3,12.5 125.5,12.1 125,10.4"],
  [8.8, "117.3,8.5 119.4,11.2 118.5,9.5"],
  [8.8, "120.6,13.4 121.4,13 121.1,12.3"],
];

const SEAS: string[] = [
  "28,42 27.8,43.8 29.6,45.2 31,46.6 33.5,46 32.6,45.3 33.7,44.4 36.5,45.2 35,46.2 38.2,47.1 39.2,47.1 37.8,45.6 37.5,44.7 40,43.4 41.6,42.3 41.5,41.5 38.3,40.9 35,42 33.3,42 29.1,41.2",
  "47,44.8 49,46.4 53,46.8 53,45.3 51,44.5 52.7,42.6 54.5,41.8 53,40.8 53.7,37.2 51.5,36.7 49,37.6 49.3,39.5 49.3,40.5 47.6,42.8",
];

const LAKES: string[] = [
  "-92,46.7 -88.5,48.6 -84.8,46.8 -88,47.2",
  "-87.8,42 -87.3,44.5 -85.5,46 -86.4,44 -87,41.8",
  "-84.5,46 -81,45.8 -80.3,44.8 -82,45 -82.5,43.4 -83.2,45",
  "-83.2,41.8 -80,42.5 -79,42.9 -82,41.5",
  "-79.7,43.3 -76.5,44.1 -77,43.4",
  "-99,50.7 -97.7,53.5 -98.6,53.2 -98,51",
  "-117,61 -109,62.8 -113,61.9",
  "-125,66 -118,66.5 -122,65.2",
  "-111,58.7 -106,59.5 -110,59.4",
  "-102.5,56.5 -101.5,58 -101.8,56.5",
  "30,60 33,61 32.5,60.2",
  "35,61 36.5,62 36,61.2",
  "104,51.5 108,53 109.8,55.6 106,52.5",
  "73.5,45.2 74.5,46.7 79,46.7 79,46.1 75,46.1",
  "31.8,-0.5 33.8,0.2 33.5,-2.3 32,-2.4",
  "29.3,-3.5 29.8,-3.8 31,-8.6 30.3,-7.8",
  "34,-9.8 34.9,-11.5 35,-14 34.3,-12",
];

const ANTARCTICA =
  "13,196 50,194 90,199 140,200 172,198 170,195 140,196 127,190 128,181 158,178 140,173 108,168 107,164 150,168 155,157 180,156 210,153 250,154 300,151 340,158 355,155 345,149 370,148 385,150 450,149 490,151 500,143 497,122 515,110 540,105 510,118 507,126 522,132 525,150 505,157 460,162 450,172 470,179 520,184 540,190 575,182 660,178 640,174 630,170 650,164 710,157 718,148 728,147 740,140 765,141 790,142 805,137 815,140 830,134 845,138 860,136 900,134 925,131 932,127 940,129 955,131 985,121 1005,119 1020,115 1035,122 1050,120 1060,125 1075,123 1085,127 1078,136 1090,143 1102,134 1115,132 1135,122 1160,119 1180,121 1220,122 1228,115 1240,119 1260,116 1270,118 1310,123 1330,118 1360,119 1368,115 1375,119 1400,119 1440,126 1480,133 1522,139 1518,148 1490,157 1502,170 1475,181 1510,190 1560,196 1560,221 13,221";

const STOPS: [number, number[]][] = [
  [0, [61, 89, 65]],
  [1 / 6, [119, 136, 104]],
  [2 / 6, [181, 185, 145]],
  [3 / 6, [246, 237, 189]],
  [4 / 6, [237, 187, 138]],
  [5 / 6, [222, 138, 90]],
  [1, [202, 86, 44]],
];

function fall(value: number): string {
  const t = Math.max(0, Math.min(0.9999, (value - 0.74) / 31.2));
  const i = Math.floor(t * 6);
  const f = t * 6 - i;
  const c = STOPS[i][1].map((a, k) => Math.round(a + (STOPS[i + 1][1][k] - a) * f));
  return `rgb(${c.join(",")})`;
}

function WorldMap() {
  return (
    <svg width="518" height="260" viewBox="-1 -1 518 260" className="block shrink-0">
      <rect x="0.5" y="0.5" width="516" height="258" fill="#fff" />
      <g
        transform="translate(258.5 129.3) scale(1.4333 -1.4333)"
        stroke="#444"
        strokeWidth="1"
        strokeLinejoin="round"
      >
        {LAND.map((p, i) => (
          <polygon key={i} points={p} fill="#E5ECF6" vectorEffect="non-scaling-stroke" />
        ))}
        {DATA.map(([v, p], i) => (
          <polygon
            key={i}
            points={p}
            fill={v === null ? "#E5ECF6" : fall(v)}
            strokeWidth="0.8"
            vectorEffect="non-scaling-stroke"
          />
        ))}
        {SEAS.map((p, i) => (
          <polygon key={i} points={p} fill="#fff" strokeWidth="0.8" vectorEffect="non-scaling-stroke" />
        ))}
        {LAKES.map((p, i) => (
          <polygon key={i} points={p} fill="#fff" stroke="none" />
        ))}
      </g>
      <g transform="translate(-4 185) scale(.3333)" stroke="#444" strokeWidth="3" strokeLinejoin="round" fill="#E5ECF6">
        <polygon points={ANTARCTICA} />
        <polygon points="553,179 570,169 582,167 600,173 595,180 575,183" />
        <polygon points="463,144 478,141 480,131 492,131 495,140 480,147" />
        <polygon points="500,178 520,176 530,179 520,183" />
        <polygon points="83,171 95,170 101,174 90,175" />
        <polygon points="240,150 275,150 255,152" />
        <polygon points="343,144 372,144 355,147" />
      </g>
      <rect x="0.5" y="0.5" width="516" height="258" fill="none" stroke="#777" />
    </svg>
  );
}

function Logo() {
  return (
    <svg width="208" height="48" viewBox="0 0 208 48" className="block overflow-visible">
      <clipPath id="d-shape">
        <path d="M0 0H34C50 1 60 10 60 22C60 37 47 48 33 48H0Z" />
      </clipPath>
      <g clipPath="url(#d-shape)">
        <rect width="60" height="48" fill="#ffcc00" />
        <path d="M0 0H60L51 7C42 17 33 24 16 31L13 48H0Z" fill="#f00" />
        <path d="M0 0H34C25 8 18 20 15 31L0 35Z" fill="#000" />
        <g fill="none" stroke="#fff" strokeWidth="1">
          <path d="M0 15C18 20 36 21 60 19" />
          <path d="M0 35C20 31 38 20 52 6" />
          <path d="M34 0C22 11 14 28 13 48" />
        </g>
        <g fill="#fff">
          <circle cx="44" cy="13" r="2" />
          <circle cx="20" cy="19.500" r="1.800" />
          <circle cx="34" cy="20.500" r="1.800" />
          <circle cx="15.500" cy="30.500" r="1.800" />
          <circle cx="13" cy="42" r="2" />
        </g>
      </g>
      <text
        x="73.500"
        y="37"
        textLength="133"
        lengthAdjust="spacingAndGlyphs"
        fontFamily="Roboto, sans-serif"
        fontWeight="900"
        fontSize="33"
        fill="#000"
      >
        DATALAB
      </text>
    </svg>
  );
}

function Select({ value, clearable }: { value: string; clearable?: boolean }) {
  return (
    <div className="mx-auto flex h-[30px] w-[714px] items-center rounded-[4px] border border-[#ccc] pr-[9px] pl-[10px] text-[13.5px] leading-none tracking-[0.850px] text-[#333]">
      {!clearable && <span className="w-7 shrink-0" />}
      <span className="flex-1 text-center">{value}</span>
      <span className="flex w-7 shrink-0 items-center justify-end gap-[7px]">
        {clearable && (
          <svg width="7" height="7" viewBox="0 0 7 7" stroke="#999" strokeWidth="1.100">
            <path d="M0.500 0.500L6.500 6.500M6.500 0.500L0.500 6.500" />
          </svg>
        )}
        <svg width="9" height="5" viewBox="0 0 9 5" fill="#999">
          <path d="M0.500 0.500H8.500L4.500 4.500Z" />
        </svg>
      </span>
    </div>
  );
}

const COLUMNS: { title: string[]; value: string }[] = [
  { title: ["COUNTRY"], value: "Colombia" },
  { title: ["DOING_BUSINESS_RANK", "2019"], value: "67" },
  { title: ["GDP_GROWTH 2021"], value: "10.6770130738261" },
  { title: ["GDP_PERCAPITA", "2021"], value: "16903.7938821745" },
  { title: ["HDI_RANK", "2021"], value: "88" },
  { title: ["HDI_SCORE", "2021"], value: "0.752" },
  { title: ["NATIONAL_POVERTY_RATIO", "2020"], value: "42.5" },
  { title: ["RANG_DEU_GROSSODA", "2021"], value: "3" },
];

function SortIcon() {
  return (
    <svg width="7" height="10" viewBox="0 0 7 10" fill="#b5b5b5" className="mt-px shrink-0">
      <path d="M0 4.300L3.500 0L7 4.300ZM0 5.700H7L3.500 10Z" />
    </svg>
  );
}

function CaseIcon() {
  return (
    <span className="flex h-[14px] w-[12px] shrink-0 items-center justify-center rounded-[2px] border border-[#fde8ee] text-[7px] font-bold text-[#fde3ea]">
      Aa
    </span>
  );
}

function DataTable() {
  return (
    <div className="grid w-[1080px] grid-cols-[99px_162px_141px_142px_99px_104px_184px_148px] border-t border-l border-[#d3d3d3] font-['DejaVu_Sans_Mono',monospace]">
      {COLUMNS.map((c) => (
        <div
          key={c.title[0]}
          className="flex h-[32px] items-center border-r border-b border-[#d3d3d3] bg-[#0c969b] pl-[1px] text-black"
        >
          <div className="flex items-start gap-px">
            <SortIcon />
            <div className="flex flex-col font-['Noto_Sans_Mono','DejaVu_Sans_Mono',monospace] text-[11px] leading-[14px] font-bold tracking-[0.640px] whitespace-nowrap">
              {c.title.map((t) => (
                <span key={t}>{t}</span>
              ))}
            </div>
          </div>
        </div>
      ))}
      {COLUMNS.map((c, i) => (
        <div key={c.title[0]} className="flex h-[25px] items-center border-r border-b border-[#d3d3d3] bg-[#fafafa] pl-[1px]">
          <CaseIcon />
          {i === 0 && <span className="pl-px text-[10px] tracking-[-0.200px] whitespace-nowrap text-[#333]">filter data...</span>}
        </div>
      ))}
      {COLUMNS.map((c) => (
        <div
          key={c.title[0]}
          className="flex h-[25px] items-center border-r border-b border-[#d3d3d3] bg-white pt-[2px] pl-[1px] text-[12px] tracking-[0.950px] text-[#505050]"
        >
          {c.value}
        </div>
      ))}
    </div>
  );
}

export default function App() {
  return (
    <main className="h-[777px] w-[1090px] overflow-hidden bg-white pt-[2px] font-[Lato,sans-serif]">
      <header className="flex flex-col items-center border-t border-[#ddd] text-center">
        <div className="pr-[8px]">
          <Logo />
        </div>
        <h1 className="mt-[11px] text-[28px] leading-[32px] tracking-[2.200px] whitespace-nowrap text-[#111]">
          PROTOTYP LÄNDERSACHSTAND
        </h1>
        <p className="mt-[5px] text-[13.500px] leading-[20px] tracking-[0.900px] whitespace-nowrap text-[#606060]">
          Das ist ein Prototyp, der Fehler enthalten kann. Weltbank-Indikatoren werden per API für die letzten fünf Jahre abgefragt und der aktuellste Wert
          <br />
          übernommen. Der HDI wird per csv-Datei eingelesen. Der ODA-Rang von DEU wird für 2021 nach Brutto ODA und bilaterale DAC-Geber berechnet.
        </p>
        <h2 className="mt-[28px] mr-[3px] h-[28px] text-[11.500px] leading-[16px] tracking-[0.350px] text-black">ÜBER DIESE APP</h2>
      </header>
      <Select value="GDP_PerCapita" />
      <section className="flex h-[395px] items-start pt-[69px] pl-[273px]">
        <WorldMap />
        <div className="ml-[229px] pt-[8px] text-[#2a3f5f]">
          <div className="font-['Open_Sans',sans-serif] text-[12.500px] leading-[18px] tracking-[1px]">Value</div>
          <div className="mt-[1px] flex">
            <div className="h-[224px] w-[25px] bg-[linear-gradient(to_top,rgb(61,89,65),rgb(119,136,104),rgb(181,185,145),rgb(246,237,189),rgb(237,187,138),rgb(222,138,90),rgb(202,86,44))]" />
            <div className="flex flex-col pt-[6px] pl-[3px] font-['DejaVu_Sans',sans-serif] text-[10px] tracking-[0.700px]">
              {["30k", "25k", "20k", "15k", "10k", "5k"].map((t) => (
                <span key={t} className="h-[35.800px] leading-[18px]">
                  {t}
                </span>
              ))}
            </div>
          </div>
        </div>
      </section>
      <Select value="Colombia" clearable />
      <div className="pt-[20px] pl-[5px]">
        <button className="flex h-[24px] w-[52px] items-start justify-center border border-black bg-[#efefef] font-['Open_Sans',sans-serif] text-[13px] leading-[20px] tracking-[-0.100px] text-[#111]">
          Export
        </button>
        <DataTable />
      </div>
    </main>
  );
}
